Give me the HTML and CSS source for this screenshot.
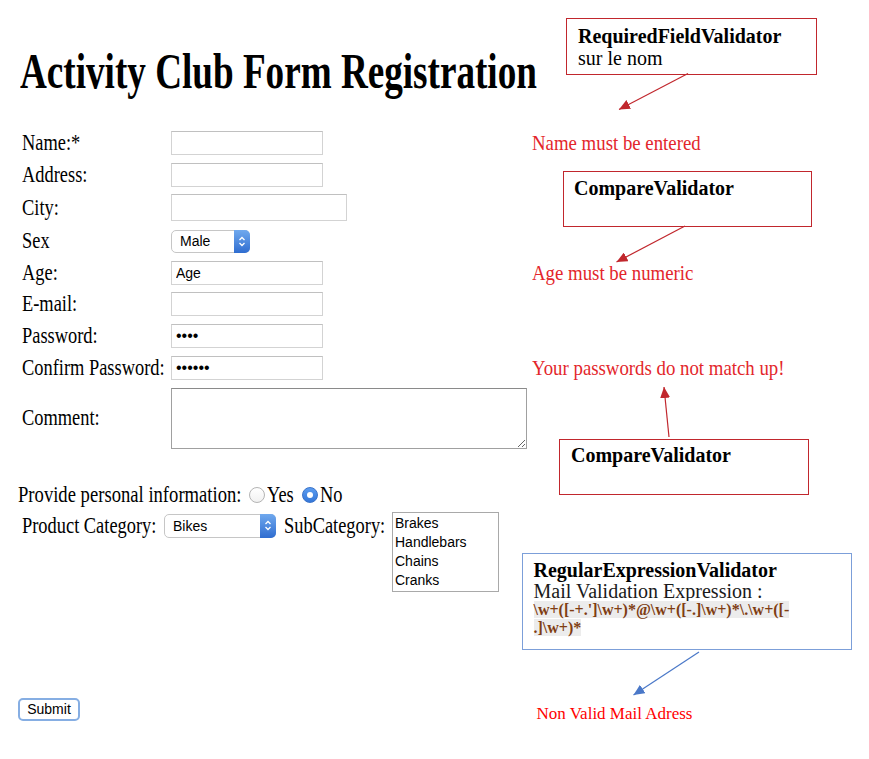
FILE: index.html
```html
<!DOCTYPE html>
<html lang="en">
<head>
<meta charset="utf-8">
<title>Activity Club Form Registration</title>
<link rel="stylesheet" href="styles.css">
</head>
<body>
<div class="page">
  <h1 class="title"><span class="sx">Activity Club Form Registration</span></h1>

  <form class="form">
    <label class="lbl"><span class="sx">Name:*</span></label>
    <input class="field" type="text">
    <div class="msg"><span class="sx">Name must be entered</span></div>

    <label class="lbl"><span class="sx">Address:</span></label>
    <input class="field" type="text">

    <label class="lbl"><span class="sx">City:</span></label>
    <input class="field wide" type="text">

    <label class="lbl"><span class="sx">Sex</span></label>
    <div class="select sex"><span class="val">Male</span><span class="arr"><svg width="8" height="13" viewBox="0 0 8 13"><path d="M1.5 5 L4 2.5 L6.5 5 M1.5 8 L4 10.5 L6.5 8" fill="none" stroke="#fff" stroke-width="1.3"/></svg></span></div>

    <label class="lbl"><span class="sx">Age:</span></label>
    <input class="field" type="text" value="Age">
    <div class="msg"><span class="sx">Age must be numeric</span></div>

    <label class="lbl"><span class="sx">E-mail:</span></label>
    <input class="field" type="text">

    <label class="lbl"><span class="sx">Password:</span></label>
    <input class="field pw" type="password" value="abcd">

    <label class="lbl"><span class="sx">Confirm Password:</span></label>
    <input class="field pw" type="password" value="abcdef">
    <div class="msg"><span class="sx">Your passwords do not match up!</span></div>

    <label class="lbl"><span class="sx">Comment:</span></label>
    <textarea class="area"></textarea>
  </form>

  <div class="provide">
    <div class="provide-text"><span class="sx">Provide personal information:</span></div>
    <span class="radio"></span>
    <div class="opt-yes"><span class="sx">Yes</span></div>
    <span class="radio on"></span>
    <div class="opt-no"><span class="sx">No</span></div>
  </div>

  <div class="cat">
    <div class="cat-text first"><span class="sx">Product Category:</span></div>
    <div class="select bikes"><span class="val">Bikes</span><span class="arr"><svg width="8" height="13" viewBox="0 0 8 13"><path d="M1.5 5 L4 2.5 L6.5 5 M1.5 8 L4 10.5 L6.5 8" fill="none" stroke="#fff" stroke-width="1.3"/></svg></span></div>
    <div class="cat-text sub"><span class="sx">SubCategory:</span></div>
    <div class="listbox">
      <div>Brakes</div>
      <div>Handlebars</div>
      <div>Chains</div>
      <div>Cranks</div>
    </div>
  </div>

  <div class="submit-row"><button class="btn" type="button">Submit</button></div>

  <div class="callout c1">
    <div class="c-title">RequiredFieldValidator</div>
    <div class="c-line">sur le nom</div>
  </div>
  <div class="callout c2">
    <div class="c-title">CompareValidator</div>
  </div>
  <div class="callout c3">
    <div class="c-title">CompareValidator</div>
  </div>
  <div class="callout c4">
    <div class="c-title">RegularExpressionValidator</div>
    <div class="c-line">Mail Validation Expression :</div>
    <div class="regex"><span>\w+([-+.']\w+)*@\w+([-.]\w+)*\.\w+([-</span><br><span>.]\w+)*</span></div>
  </div>
  <div class="mail-msg">Non Valid Mail Adress</div>

  <svg class="arrows" width="869" height="759" viewBox="0 0 869 759">
    <defs>
      <marker id="ar-red" markerUnits="userSpaceOnUse" markerWidth="12" markerHeight="10" refX="11" refY="5" orient="auto">
        <path d="M0 0 L11 5 L0 10 Z" fill="#c1272d"/>
      </marker>
      <marker id="ar-blue" markerUnits="userSpaceOnUse" markerWidth="12" markerHeight="10" refX="11" refY="5" orient="auto">
        <path d="M0 0 L11 5 L0 10 Z" fill="#4a78c8"/>
      </marker>
    </defs>
    <line x1="688" y1="73.5" x2="619" y2="109.5" stroke="#c1272d" stroke-width="1.2" marker-end="url(#ar-red)"/>
    <line x1="685" y1="226" x2="616.5" y2="262" stroke="#c1272d" stroke-width="1.2" marker-end="url(#ar-red)"/>
    <line x1="669" y1="437" x2="664" y2="387" stroke="#c1272d" stroke-width="1.2" marker-end="url(#ar-red)"/>
    <line x1="699" y1="652" x2="633.5" y2="695" stroke="#4a78c8" stroke-width="1.2" marker-end="url(#ar-blue)"/>
  </svg>
</div>
</body>
</html>
```

FILE: styles.css
```css
body {
  margin: 0;
  font-family: "Liberation Serif", "Times New Roman", serif;
  color: #000;
  background: #fff;
}

.page {
  position: relative;
  width: 869px;
  height: 759px;
  overflow: hidden;
}

.sx {
  display: inline-block;
  white-space: nowrap;
  transform-origin: 0 50%;
  transform: scaleX(0.8);
}

.title {
  margin: 46px 0 0 20px;
  font-size: 50px;
  line-height: 50px;
  font-weight: bold;
}

.title .sx {
  transform: scaleX(0.743);
}

/* form grid */
.form {
  display: grid;
  grid-template-columns: 149px 361px 1fr;
  row-gap: 7.7px;
  align-items: center;
  margin: 35px 0 0 22px;
}

.lbl {
  grid-column: 1;
  font-size: 23px;
  line-height: 24px;
}

.form .field,
.form .select,
.form .area {
  grid-column: 2;
}

.msg {
  grid-column: 3;
  font-size: 22px;
  line-height: 24px;
  color: #e3262b;
}

.msg .sx {
  transform: scaleX(0.855);
}

.field {
  display: block;
  box-sizing: border-box;
  width: 152px;
  height: 24px;
  margin: 0;
  border: 1px solid #d3d3d3;
  border-top-color: #c0c0c0;
  padding: 0 4px;
  font: 14px "Liberation Sans", Arial, sans-serif;
  color: #000;
  background: #fff;
  outline: none;
}

.field.wide {
  width: 176px;
  height: 27px;
}

.field.pw {
  font-size: 16px;
  letter-spacing: 0;
}

.area {
  display: block;
  box-sizing: border-box;
  width: 356px;
  height: 61px;
  margin: 0;
  border: 1px solid #a0a0a0;
  border-top-color: #8a8a8a;
  background: #fff;
  resize: both;
}

/* custom select */
.select {
  box-sizing: border-box;
  display: flex;
  align-items: stretch;
  height: 23px;
  border: 1px solid #c6c6c6;
  border-radius: 5px;
  background: #fff;
  font: 14px "Liberation Sans", Arial, sans-serif;
  color: #000;
}

.select.sex {
  width: 79px;
}

.select .val {
  flex: 1;
  display: flex;
  align-items: center;
  padding-left: 8px;
}

.select .arr {
  width: 16px;
  margin: -1px -1px -1px 0;
  border-radius: 0 5px 5px 0;
  background: linear-gradient(#70a9ee, #2f6dd0);
  display: flex;
  align-items: center;
  justify-content: center;
}

/* radios */
.provide {
  display: flex;
  align-items: center;
  height: 24px;
  margin: 34.4px 0 0 18px;
  font-size: 23px;
}

.provide-text {
  flex: none;
  width: 231px;
}

.provide-text .sx {
  transform: scaleX(0.81);
}

.radio {
  flex: none;
  box-sizing: border-box;
  width: 16px;
  height: 16px;
  border: 1px solid #b4b4b4;
  border-radius: 50%;
  background: linear-gradient(#ffffff, #f1f1f1);
  margin-right: 2px;
  position: relative;
}

.radio.on {
  border-color: #3a73c9;
  background: linear-gradient(#5b9cf0, #3477d9);
}

.radio.on::after {
  content: "";
  position: absolute;
  left: 4px;
  top: 4px;
  width: 6px;
  height: 6px;
  border-radius: 50%;
  background: #fff;
}

.opt-yes {
  flex: none;
  width: 35px;
}

.opt-no {
  flex: none;
  width: 30px;
}

/* category row */
.cat {
  display: flex;
  align-items: flex-start;
  margin: 5px 0 0 22px;
  font-size: 23px;
}

.cat-text {
  flex: none;
  height: 24px;
  margin-top: 2px;
  display: flex;
  align-items: center;
}

.cat-text.first {
  width: 142px;
}

.cat-text.sub {
  width: 108px;
  margin-left: 8px;
}

.select.bikes {
  flex: none;
  width: 112px;
  height: 24px;
  margin-top: 2px;
}

.listbox {
  flex: none;
  box-sizing: border-box;
  width: 107px;
  height: 80px;
  border: 1px solid #a9a9a9;
  padding: 1px 2px;
  font: 14px/19px "Liberation Sans", Arial, sans-serif;
}

/* submit */
.submit-row {
  margin: 106px 0 0 18px;
}

.btn {
  box-sizing: border-box;
  width: 62px;
  height: 23px;
  padding: 0;
  border: 2px solid #86aee3;
  border-radius: 5px;
  background: #fff;
  font: 14px "Liberation Sans", Arial, sans-serif;
  color: #000;
}

/* annotations */
.callout {
  position: absolute;
  box-sizing: border-box;
  border: 1px solid #c1272d;
  background: #fff;
}

.c-title {
  font-weight: bold;
  white-space: nowrap;
}

.c1 {
  left: 566px;
  top: 18px;
  width: 251px;
  height: 57px;
  padding: 5.5px 11px 0;
  font-size: 20px;
  line-height: 22px;
}

.c2 {
  left: 563px;
  top: 170.5px;
  width: 249px;
  height: 56.5px;
  padding: 6px 10px 0;
  font-size: 20px;
  line-height: 21px;
}

.c3 {
  left: 559px;
  top: 438.5px;
  width: 250px;
  height: 56px;
  padding: 5px 11px 0;
  font-size: 20px;
  line-height: 21px;
}

.c4 {
  left: 521.5px;
  top: 552.5px;
  width: 330px;
  height: 97px;
  border: 1.5px solid #7c9fd9;
  padding: 5px 11px 0;
  font-size: 20px;
  line-height: 22px;
}

.c4 .c-line {
  line-height: 20px;
  color: #1a1a1a;
}

.regex {
  margin-top: 0;
  font-size: 16px;
  line-height: 18.7px;
  font-weight: bold;
  color: #7f3d12;
  white-space: nowrap;
}

.regex span {
  background: #ececec;
}

.mail-msg {
  position: absolute;
  left: 536.5px;
  top: 704px;
  font-size: 17px;
  line-height: 20px;
  color: #ff0000;
  white-space: nowrap;
}

.arrows {
  position: absolute;
  left: 0;
  top: 0;
  pointer-events: none;
}
```
